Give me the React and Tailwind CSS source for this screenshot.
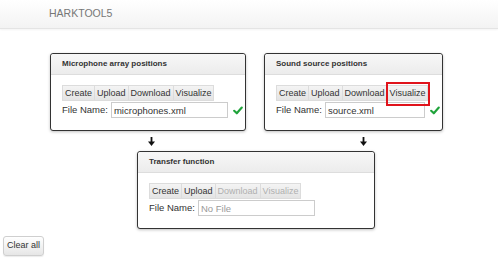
import React from "react";

const Check = () => (
  <svg width="10" height="9" viewBox="0 0 10 9" className="ml-[5px] shrink-0">
    <path d="M1.2 4.8 L3.8 7.3 L8.8 1.5" fill="none" stroke="#1fa33a" strokeWidth="2.1" strokeLinecap="round" strokeLinejoin="round" />
  </svg>
);

const Arrow = ({ className }) => (
  <svg width="7" height="9" viewBox="0 0 7 9" className={className}>
    <rect x="2.6" y="0" width="1.8" height="5" fill="#111" />
    <path d="M0 4.5 L7 4.5 L3.5 9 Z" fill="#111" />
  </svg>
);

const Btn = ({ children, disabled, marked }) => (
  <button
    className={
      "relative h-[16px] px-[2px] text-[9px] leading-none border border-[#dcdcdc] bg-gradient-to-b from-[#f4f4f4] to-[#e4e4e4] -ml-px first:ml-0 " +
      (disabled ? "text-[#b0b0b0]" : "text-[#333]")
    }
  >
    {children}
    {marked && (
      <span className="absolute -left-[2px] -right-[3px] -top-[4px] -bottom-[6px] border-2 border-[#e0131b]" />
    )}
  </button>
);

const Card = ({ title, width, inputWidth, value, placeholder, checked, disabled = [], marked }) => (
  <div className={"border border-[#333] rounded-[3px] bg-white shadow-[0_1px_3px_rgba(0,0,0,0.25)] " + width}>
    <div className="h-[21px] px-[11px] flex items-center bg-gradient-to-b from-[#f7f7f7] to-[#ececec] border-b border-[#dddddd] rounded-t-[3px]">
      <span className="text-[8px] font-bold text-[#333] whitespace-nowrap">{title}</span>
    </div>
    <div className="px-[11px] pt-[10px] pb-[12px]">
      <div className="flex">
        {["Create", "Upload", "Download", "Visualize"].map((b) => (
          <Btn key={b} disabled={disabled.includes(b)} marked={marked === b}>
            {b}
          </Btn>
        ))}
      </div>
      <div className="flex items-center mt-px h-[16px]">
        <span className="text-[9.5px] text-[#333] leading-none whitespace-nowrap shrink-0">File Name:</span>
        <input
          readOnly
          value={value}
          placeholder={placeholder}
          className={"ml-[3px] h-[16px] shrink-0 border border-[#cccccc] px-[2px] text-[9.5px] text-[#333] placeholder:text-[#9a9a9a] outline-none " + inputWidth}
        />
        {checked && <Check />}
      </div>
    </div>
  </div>
);

export default function App() {
  return (
    <div className="w-[498px] h-[258px] bg-white overflow-hidden font-['Liberation_Sans',Arial,sans-serif]">
      <div className="h-[29px] flex items-center pl-[49px] bg-gradient-to-b from-white to-[#f3f3f3] border-b border-[#e4e4e4] shadow-[0_1px_2px_rgba(0,0,0,0.05)]">
        <span className="text-[10.5px] text-[#777]">HARKTOOL5</span>
      </div>
      <div className="pt-[24px]">
        <div className="flex ml-[50px] gap-[18px]">
          <Card
            title="Microphone array positions"
            width="w-[196px]"
            inputWidth="w-[117px]"
            value="microphones.xml"
            checked
          />
          <Card
            title="Sound source positions"
            width="w-[179px]"
            inputWidth="w-[100px]"
            value="source.xml"
            checked
            marked="Visualize"
          />
        </div>
        <div className="flex h-[20px] pt-[6px]">
          <Arrow className="ml-[148px]" />
          <Arrow className="ml-[205px]" />
        </div>
        <div className="ml-[137px]">
          <Card
            title="Transfer function"
            width="w-[238px]"
            inputWidth="w-[117px]"
            value=""
            placeholder="No File"
            disabled={["Download", "Visualize"]}
          />
        </div>
        <div className="mt-[2px] ml-[3px]">
          <button className="w-[41px] h-[20px] rounded-[3px] border border-[#cfcfcf] bg-gradient-to-b from-white to-[#e6e6e6] text-[9px] text-[#333] shadow-[0_1px_1px_rgba(0,0,0,0.08)]">
            Clear all
          </button>
        </div>
      </div>
    </div>
  );
}
